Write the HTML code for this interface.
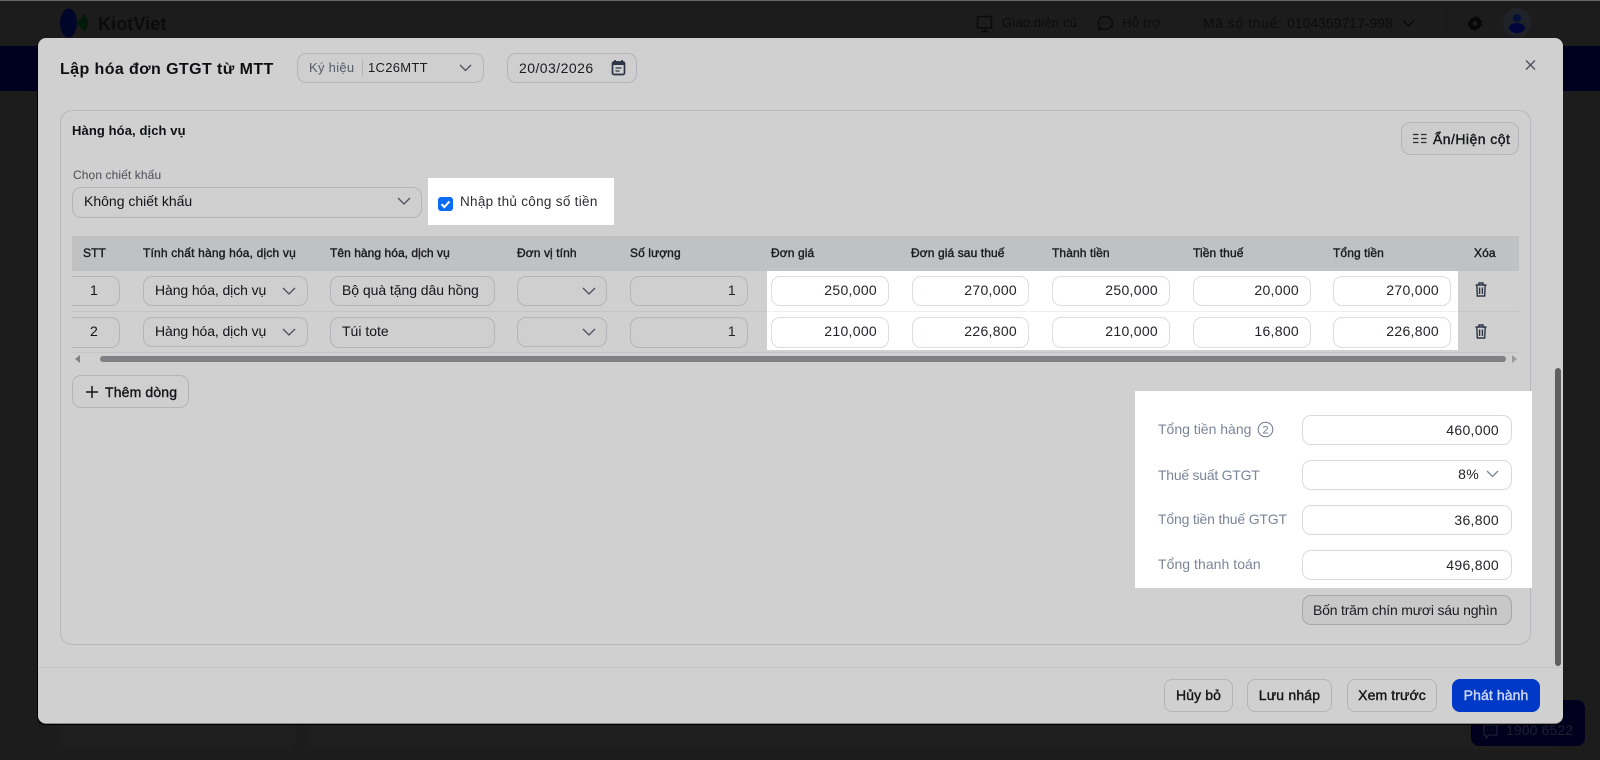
<!DOCTYPE html>
<html lang="vi"><head><meta charset="utf-8"><title>Lập hóa đơn GTGT từ MTT</title>
<style>
*{box-sizing:border-box}
html,body{margin:0;padding:0}
body{width:1600px;height:760px;position:relative;overflow:hidden;background:#1c1c1c;font-family:"Liberation Sans",sans-serif;color:#131418}
.a{position:absolute}
.t{position:absolute;white-space:nowrap;line-height:18px;font-size:14px;letter-spacing:.2px}
.s{-webkit-text-stroke:.4px currentColor}
.box{position:absolute;border:1px solid #b4b5ba;border-radius:9px;background:#cfcfcf}
.w{background:#fff;border-color:#dcdde1}
.num{position:absolute;white-space:nowrap;line-height:18px;font-size:14px;letter-spacing:.3px;text-align:right;color:#22242a}
.h{position:absolute;white-space:nowrap;line-height:16px;font-size:12px;color:#1a1b1f;top:245px;letter-spacing:.1px;-webkit-text-stroke:.4px currentColor}
.lb{position:absolute;white-space:nowrap;line-height:18px;font-size:14px;color:#7b8598;left:1158px}
.btn{position:absolute;border:1px solid #b4b5b9;border-radius:8px;text-align:center;font-size:14px;line-height:31px;height:33px;top:679px;color:#15161a;letter-spacing:.1px;-webkit-text-stroke:.4px currentColor}
svg{position:absolute;display:block}
.ch{fill:none;stroke:#4a4f5c;stroke-width:1.3}
</style></head><body>

<!-- background page -->
<div class="a" style="left:0;top:0;width:1600px;height:1px;background:#6a6464"></div>
<div class="a" style="left:0;top:46px;width:1600px;height:45px;background:#00001f"></div>
<div class="a" style="left:60px;top:91px;width:235px;height:659px;background:#1e1e1e;border-radius:8px"></div>
<div class="a" style="left:308px;top:91px;width:1250px;height:659px;background:#1e1e1e;border-radius:8px"></div>

<svg style="left:58px;top:6px" width="34" height="34" viewBox="0 0 34 34"><ellipse cx="10.500" cy="17" rx="8.500" ry="14.500" fill="#00062a"/><path d="M18 17L27 8Q33 17 27 26Z" fill="#011a09"/></svg>
<div class="t" style="left:98px;top:14px;font-size:18px;font-weight:700;line-height:20px;color:#0b0b0b;letter-spacing:.1px">KiotViet</div>

<svg style="left:976px;top:15px" width="18" height="18" viewBox="0 0 18 18" fill="none" stroke="#0a0a0a" stroke-width="1.6"><rect x="1.500" y="1.500" width="14" height="11.500" rx="1"/><path d="M8.500 13v3M5 16.500h7"/></svg>
<div class="t" style="left:1002px;top:14px;color:#0c0c0c;font-size:13px;letter-spacing:.17px">Giao diện cũ</div>
<svg style="left:1097px;top:15px" width="17" height="17" viewBox="0 0 17 17" fill="none" stroke="#0a0a0a" stroke-width="1.5"><path d="M8.500 1.500a7 6.500 0 1 1-3.500 12.200L2 15l.8-3A7 6.500 0 0 1 8.500 1.500z"/><path d="M5.200 8h.9M8 8h.9M10.800 8h.9" stroke-width="1.700"/></svg>
<div class="t" style="left:1122px;top:14px;color:#0c0c0c;font-size:13px;letter-spacing:.4px">Hỗ trợ</div>
<div class="a" style="left:1181px;top:9px;width:1px;height:29px;background:#191919"></div>
<div class="t" style="left:1203px;top:14px;color:#0c0c0c;letter-spacing:.55px;font-size:14px">Mã số thuế:</div>
<div class="t" style="left:1287px;top:14px;color:#0c0c0c;letter-spacing:0">0104359717-998</div>
<svg style="left:1402px;top:19px" width="13" height="9" viewBox="0 0 13 9"><path d="M1 1.500l5.500 5.500L12 1.500" fill="none" stroke="#0a0a0a" stroke-width="1.300"/></svg>
<div class="a" style="left:1446px;top:9px;width:1px;height:29px;background:#191919"></div>
<svg style="left:1467px;top:15px" width="16" height="17" viewBox="0 0 16 17"><path d="M8 .5l1.600 1.900 2.500-.3.800 2.400 2.300 1-.8 2.500.8 2.500-2.300 1-.8 2.400-2.500-.3L8 16.500l-1.600-1.900-2.500.3-.8-2.400-2.300-1 .8-2.500-.8-2.500 2.300-1 .8-2.400 2.500.3z" fill="#070707"/><circle cx="8" cy="8.500" r="2.300" fill="#1c1c1c"/></svg>
<div class="a" style="left:1503px;top:8px;width:28px;height:29px;border-radius:50%;background:#20222a"></div>
<svg style="left:1507px;top:13px" width="20" height="20" viewBox="0 0 20 20"><circle cx="10" cy="5" r="4" fill="#03103a"/><ellipse cx="10" cy="15" rx="8" ry="5" fill="#00063a"/></svg>

<div class="a" style="left:1471px;top:700px;width:114px;height:46px;border-radius:8px;background:#00001e"></div>
<svg style="left:1482px;top:724px" width="17" height="15" viewBox="0 0 17 15" fill="none" stroke="#1b1f30" stroke-width="1.300"><path d="M2 1h13v10H7l-3 3v-3H2z"/><path d="M5 6h.9M8 6h.9M11 6h.9"/></svg>
<div class="t" style="left:1506px;top:721px;color:#1d2130;font-size:14px;letter-spacing:.1px">1900 6522</div>

<!-- modal -->
<div class="a" style="left:38px;top:38px;width:1525px;height:686px;background:#d0d0d0;border-radius:8px;box-shadow:-1px 1px 0 #000,0 1px 0 #000;border-bottom:1px solid #8a8a8a"></div>

<div class="t" style="left:60px;top:60px;font-size:16px;font-weight:700;line-height:20px;color:#0e0f12;letter-spacing:.41px">Lập hóa đơn GTGT từ MTT</div>
<div class="box" style="left:297px;top:53px;width:187px;height:30px"></div>
<div class="t" style="left:309px;top:59px;color:#565b67;font-size:13px;letter-spacing:.3px">Ký hiệu</div>
<div class="a" style="left:362px;top:60px;width:1px;height:17px;background:#b4b5b9"></div>
<div class="t" style="left:368px;top:59px;font-size:13px;letter-spacing:.3px;color:#1b1c20">1C26MTT</div>
<svg style="left:459px;top:64px" width="13" height="8" viewBox="0 0 13 8"><path class="ch" d="M1 1l5.500 5.500L12 1"/></svg>
<div class="box" style="left:507px;top:53px;width:130px;height:30px"></div>
<div class="t" style="left:519px;top:59px;font-size:14px;letter-spacing:.45px;color:#1b1c20">20/03/2026</div>
<svg style="left:611px;top:59px" width="15" height="17" viewBox="0 0 15 17"><rect x="1.500" y="3" width="12" height="12.500" rx="1.500" fill="none" stroke="#2c3546" stroke-width="1.700"/><rect x="1.500" y="3" width="12" height="3" fill="#2c3546"/><path d="M4 1v3M11 1v3" stroke="#2c3546" stroke-width="1.700"/><path d="M4.500 9h6M4.500 12h4" stroke="#2c3546" stroke-width="1.300"/></svg>
<svg style="left:1525px;top:60px" width="11" height="10" viewBox="0 0 11 10"><path d="M1 .5l9 9M10 .5l-9 9" stroke="#4a4f5c" stroke-width="1.300" fill="none"/></svg>

<!-- panel -->
<div class="a" style="left:60px;top:110px;width:1471px;height:535px;border:1px solid #b8b9bf;border-radius:12px"></div>
<div class="t" style="left:72px;top:122px;font-size:13px;font-weight:700;color:#0f1014;letter-spacing:.1px">Hàng hóa, dịch vụ</div>
<div class="box" style="left:1401px;top:122px;width:118px;height:33px;background:#cdcdcd"></div>
<svg style="left:1413px;top:133px" width="14" height="11" viewBox="0 0 14 11"><path d="M0 1.500h5.500M8 1.500h5.500M0 5.500h5.500M8 5.500h5.500M0 9.500h5.500M8 9.500h5.500" stroke="#2c2e34" stroke-width="1.200"/></svg>
<div class="t s" style="left:1433px;top:130px;color:#15161a;letter-spacing:.45px;font-size:14px">Ẩn/Hiện cột</div>

<div class="t" style="left:73px;top:166px;font-size:12px;color:#4b4e56;letter-spacing:.1px">Chọn chiết khấu</div>
<div class="box" style="left:72px;top:187px;width:350px;height:31px"></div>
<div class="t" style="left:84px;top:192px;letter-spacing:0">Không chiết khấu</div>
<svg style="left:397px;top:197px" width="14" height="9" viewBox="0 0 14 9"><path class="ch" d="M1 1l6 6 6-6"/></svg>

<div class="a" style="left:428px;top:178px;width:186px;height:47px;background:#fff"></div>
<div class="a" style="left:438px;top:197px;width:15px;height:14px;background:#0b6bf2;border-radius:3px"></div>
<svg style="left:438px;top:197px" width="15" height="14" viewBox="0 0 15 14"><path d="M3.500 7.200l2.800 2.800 5.200-5.600" fill="none" stroke="#fff" stroke-width="2"/></svg>
<div class="t" style="left:460px;top:193px;font-size:13.500px;color:#2b2d33;letter-spacing:.3px">Nhập thủ công số tiền</div>

<!-- table -->
<div class="a" style="left:72px;top:236px;width:1447px;height:35px;background:#c0c1c3"></div>
<div class="a" style="left:72px;top:311px;width:1447px;height:1px;background:#c4c5c7"></div>
<div class="a" style="left:72px;top:352px;width:1447px;height:1px;background:#c4c5c7"></div>
<div class="h" style="left:83px">STT</div>
<div class="h" style="left:143px;letter-spacing:.18px">Tính chất hàng hóa, dịch vụ</div>
<div class="h" style="left:330px;letter-spacing:.05px">Tên hàng hóa, dịch vụ</div>
<div class="h" style="left:517px">Đơn vị tính</div>
<div class="h" style="left:630px">Số lượng</div>
<div class="h" style="left:771px">Đơn giá</div>
<div class="h" style="left:911px">Đơn giá sau thuế</div>
<div class="h" style="left:1052px">Thành tiền</div>
<div class="h" style="left:1193px">Tiền thuế</div>
<div class="h" style="left:1333px">Tổng tiền</div>
<div class="h" style="left:1474px">Xóa</div>

<div class="a" style="left:767px;top:271px;width:691px;height:79px;background:#fff"></div>
<div class="a" style="left:767px;top:311px;width:691px;height:1px;background:#eeeef0"></div>

<!-- row 1 -->
<div class="box" style="left:72px;top:276px;width:48px;height:30px;border-left:0;border-radius:0 9px 9px 0"></div>
<div class="t" style="left:90px;top:281px;letter-spacing:0">1</div>
<div class="box" style="left:143px;top:276px;width:165px;height:30px"></div>
<div class="t" style="left:155px;top:281px;letter-spacing:-.1px">Hàng hóa, dịch vụ</div>
<svg style="left:282px;top:287px" width="14" height="9" viewBox="0 0 14 9"><path class="ch" d="M1 1l6 6 6-6"/></svg>
<div class="box" style="left:330px;top:276px;width:165px;height:30px"></div>
<div class="t" style="left:342px;top:281px;letter-spacing:-.05px">Bộ quà tặng dâu hồng</div>
<div class="box" style="left:517px;top:276px;width:90px;height:30px"></div>
<svg style="left:582px;top:287px" width="14" height="9" viewBox="0 0 14 9"><path class="ch" d="M1 1l6 6 6-6"/></svg>
<div class="box" style="left:630px;top:276px;width:118px;height:30px"></div>
<div class="num" style="left:700px;width:36px;top:281px">1</div>
<div class="box w" style="left:771px;top:276px;width:118px;height:30px"></div>
<div class="num" style="left:790px;width:87px;top:281px">250,000</div>
<div class="box w" style="left:912px;top:276px;width:117px;height:30px"></div>
<div class="num" style="left:930px;width:87px;top:281px">270,000</div>
<div class="box w" style="left:1052px;top:276px;width:118px;height:30px"></div>
<div class="num" style="left:1070px;width:88px;top:281px">250,000</div>
<div class="box w" style="left:1193px;top:276px;width:118px;height:30px"></div>
<div class="num" style="left:1210px;width:89px;top:281px">20,000</div>
<div class="box w" style="left:1333px;top:276px;width:118px;height:30px"></div>
<div class="num" style="left:1350px;width:89px;top:281px">270,000</div>
<svg style="left:1475px;top:282px" width="12" height="15" viewBox="0 0 12 15" fill="none" stroke="#2c3546" stroke-width="1.400"><path d="M.5 3h11M4 3V1h4v2M1.800 3l.5 11h7.400l.5-11M4.600 5.500v6.500M7.400 5.500v6.500"/></svg>

<!-- row 2 -->
<div class="box" style="left:72px;top:317px;width:48px;height:31px;border-left:0;border-radius:0 9px 9px 0"></div>
<div class="t" style="left:90px;top:322px;letter-spacing:0">2</div>
<div class="box" style="left:143px;top:317px;width:165px;height:30px"></div>
<div class="t" style="left:155px;top:322px;letter-spacing:-.1px">Hàng hóa, dịch vụ</div>
<svg style="left:282px;top:328px" width="14" height="9" viewBox="0 0 14 9"><path class="ch" d="M1 1l6 6 6-6"/></svg>
<div class="box" style="left:330px;top:317px;width:165px;height:31px"></div>
<div class="t" style="left:342px;top:322px;letter-spacing:0">Túi tote</div>
<div class="box" style="left:517px;top:317px;width:90px;height:30px"></div>
<svg style="left:582px;top:328px" width="14" height="9" viewBox="0 0 14 9"><path class="ch" d="M1 1l6 6 6-6"/></svg>
<div class="box" style="left:630px;top:317px;width:118px;height:31px"></div>
<div class="num" style="left:700px;width:36px;top:322px">1</div>
<div class="box w" style="left:771px;top:317px;width:118px;height:31px"></div>
<div class="num" style="left:790px;width:87px;top:322px">210,000</div>
<div class="box w" style="left:912px;top:317px;width:117px;height:31px"></div>
<div class="num" style="left:930px;width:87px;top:322px">226,800</div>
<div class="box w" style="left:1052px;top:317px;width:118px;height:31px"></div>
<div class="num" style="left:1070px;width:88px;top:322px">210,000</div>
<div class="box w" style="left:1193px;top:317px;width:118px;height:31px"></div>
<div class="num" style="left:1210px;width:89px;top:322px">16,800</div>
<div class="box w" style="left:1333px;top:317px;width:118px;height:31px"></div>
<div class="num" style="left:1350px;width:89px;top:322px">226,800</div>
<svg style="left:1475px;top:324px" width="12" height="15" viewBox="0 0 12 15" fill="none" stroke="#2c3546" stroke-width="1.400"><path d="M.5 3h11M4 3V1h4v2M1.800 3l.5 11h7.400l.5-11M4.600 5.500v6.500M7.400 5.500v6.500"/></svg>

<!-- scrollbar -->
<div class="a" style="left:100px;top:356px;width:1406px;height:6px;background:#7f8084;border-radius:3px"></div>
<svg style="left:75px;top:355px" width="5" height="8" viewBox="0 0 5 8"><path d="M5 0v8L0 4z" fill="#7f8084"/></svg>
<svg style="left:1512px;top:355px" width="5" height="8" viewBox="0 0 5 8"><path d="M0 0v8l5-4z" fill="#9a9b9f"/></svg>

<div class="box" style="left:72px;top:375px;width:117px;height:33px;background:#cfcfcf"></div>
<svg style="left:86px;top:386px" width="12" height="12" viewBox="0 0 12 12"><path d="M6 0v12M0 6h12" stroke="#15161a" stroke-width="1.500"/></svg>
<div class="t s" style="left:105px;top:383px;letter-spacing:.15px;color:#15161a">Thêm dòng</div>

<!-- totals -->
<div class="a" style="left:1135px;top:391px;width:397px;height:197px;background:#fff"></div>
<div class="lb" style="top:420px;letter-spacing:0">Tổng tiền hàng</div>
<svg style="left:1257px;top:421px" width="17" height="17" viewBox="0 0 17 17"><circle cx="8.500" cy="8.500" r="7.300" fill="none" stroke="#6f7789" stroke-width="1"/><text x="8.500" y="12.500" font-size="11" text-anchor="middle" fill="#6f7789" font-family="Liberation Sans, sans-serif">2</text></svg>
<div class="lb" style="top:466px;letter-spacing:-.25px">Thuế suất GTGT</div>
<div class="lb" style="top:510px;letter-spacing:-.18px">Tổng tiền thuế GTGT</div>
<div class="lb" style="top:555px;letter-spacing:.05px">Tổng thanh toán</div>
<div class="box w" style="left:1302px;top:415px;width:210px;height:30px;border-color:#d8dade"></div>
<div class="num" style="left:1400px;width:99px;top:421px">460,000</div>
<div class="box w" style="left:1302px;top:460px;width:210px;height:30px;border-color:#d8dade"></div>
<div class="num" style="left:1420px;width:59px;top:465px">8%</div>
<svg style="left:1486px;top:470px" width="13" height="8" viewBox="0 0 13 8"><path d="M1 1l5.500 5.500L12 1" fill="none" stroke="#7b8598" stroke-width="1.300"/></svg>
<div class="box w" style="left:1302px;top:505px;width:210px;height:30px;border-color:#d8dade"></div>
<div class="num" style="left:1400px;width:99px;top:511px">36,800</div>
<div class="box w" style="left:1302px;top:550px;width:210px;height:30px;border-color:#d8dade"></div>
<div class="num" style="left:1400px;width:99px;top:556px">496,800</div>
<div class="box" style="left:1302px;top:595px;width:210px;height:30px;background:#c8c8c8;border-color:#a6a7ad"></div>
<div class="t" style="left:1313px;top:601px;color:#1b1c20;letter-spacing:-.2px">Bốn trăm chín mươi sáu nghìn</div>

<!-- modal scrollbar & footer -->
<div class="a" style="left:1555px;top:368px;width:6px;height:298px;background:#5f5f5f;border-radius:3px"></div>
<div class="a" style="left:38px;top:667px;width:1525px;height:1px;background:#c4c4c4"></div>
<div class="btn" style="left:1164px;width:69px">Hủy bỏ</div>
<div class="btn" style="left:1247px;width:85px;letter-spacing:.2px">Lưu nháp</div>
<div class="btn" style="left:1347px;width:90px">Xem trước</div>
<div class="btn" style="left:1452px;width:88px;background:#0038c8;border-color:#0038c8;color:#cfd8f2">Phát hành</div>

</body></html>
